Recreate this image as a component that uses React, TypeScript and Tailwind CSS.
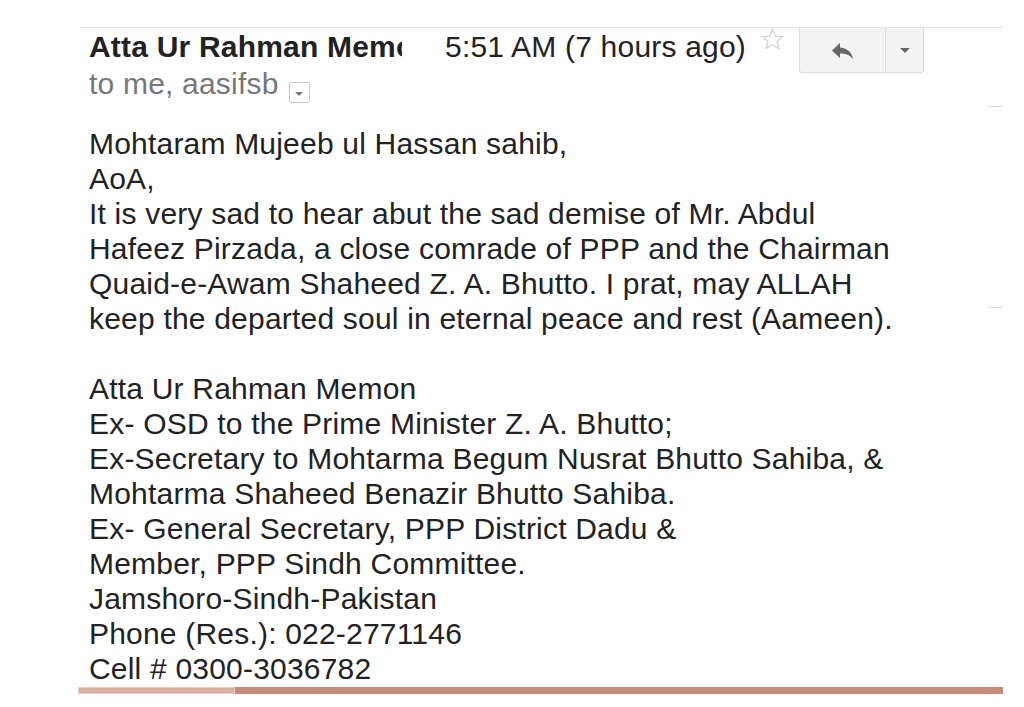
import { useState } from "react";

const bodyLines = [
  "Mohtaram Mujeeb ul Hassan sahib,",
  "AoA,",
  "It is very sad to hear abut the sad demise of Mr. Abdul",
  "Hafeez Pirzada, a close comrade of PPP and the Chairman",
  "Quaid-e-Awam Shaheed Z. A. Bhutto. I prat, may ALLAH",
  "keep the departed soul in eternal peace and rest (Aameen).",
  "",
  "Atta Ur Rahman Memon",
  "Ex- OSD to the Prime Minister Z. A. Bhutto;",
  "Ex-Secretary to Mohtarma Begum Nusrat Bhutto Sahiba, &",
  "Mohtarma Shaheed Benazir Bhutto Sahiba.",
  "Ex- General Secretary, PPP District Dadu &",
  "Member, PPP Sindh Committee.",
  "Jamshoro-Sindh-Pakistan",
  "Phone (Res.): 022-2771146",
  "Cell # 0300-3036782",
];

function StarIcon() {
  return (
    <svg width="25" height="25" viewBox="0 0 24 24" fill="none" stroke="#d4d4d4" strokeWidth="1.3">
      <path d="M12 2.5l2.8 6.3 6.7.6-5.1 4.5 1.6 6.6L12 17l-6 3.5 1.6-6.6-5.1-4.5 6.7-.6z" />
    </svg>
  );
}

function ReplyIcon() {
  return (
    <svg width="24" height="18" viewBox="0 0 24 18" fill="#666">
      <path d="M9 1L1 8.5 9 16v-4.6c6 0 10 1.5 13 5.6-1-6-5-10.5-13-11.4z" />
    </svg>
  );
}

export default function App() {
  const [starred, setStarred] = useState(false);

  return (
    <div className="h-[707px] w-[1024px] overflow-hidden bg-white font-['Liberation_Sans',Arial,sans-serif] tracking-[0.2px] text-[#222]">
      <div className="ml-[80px] mt-[27px] w-[923px] border-t border-[#e3e3e3]">
        <div className="flex items-start pl-[9px]">
          <div className="flex-1 pt-[1px]">
            <div className="flex h-[35px] items-start text-[30px] leading-[35px]">
              <span className="w-[313px] overflow-hidden whitespace-nowrap font-bold">Atta Ur Rahman Memon</span>
              <span className="ml-[43px] whitespace-nowrap">5:51 AM (7 hours ago)</span>
              <button onClick={() => setStarred(!starred)} className="ml-[14px] -mt-[2px]">
                <StarIcon />
              </button>
            </div>
            <div className="flex h-[36px] items-start pt-[2px] text-[30px] leading-[35px] text-[#777]">
              to me, aasifsb
              <span className="ml-[10px] mt-[16px] flex h-[21px] w-[21px] items-center justify-center rounded-[2px] border border-[#c8c8c8]">
                <span className="mt-[3px] border-x-[4px] border-t-[4px] border-x-transparent border-t-[#777]" />
              </span>
            </div>
          </div>
          <div className="mr-[79px] flex h-[45px] w-[125px] rounded-b-[3px] border border-t-0 border-[#dcdcdc] bg-[#f3f3f3]">
            <div className="flex w-[86px] items-center justify-center border-r border-[#dcdcdc] pt-[2px]">
              <ReplyIcon />
            </div>
            <div className="flex flex-1 items-center justify-center">
              <span className="border-x-[5px] border-t-[5px] border-x-transparent border-t-[#666]" />
            </div>
          </div>
        </div>
        <div className="flex justify-end">
          <div className="mt-[6px] h-[1px] w-[15px] bg-[#d8d8d8]" />
        </div>
        <div className="relative pl-[9px] pt-[19px] text-[30px] leading-[35px]">
          <div className="absolute right-0 top-[200px] h-[1px] w-[15px] bg-[#d8d8d8]" />
          {bodyLines.map((line, i) => (
            <div key={i} className="h-[35px] whitespace-nowrap">
              {line}
            </div>
          ))}
        </div>
      </div>
      <div className="ml-[78px] mt-[1px] flex h-[7px] w-[925px]">
        <div className="w-[157px] border border-[#e8d0c8] bg-[#d9aea2]" />
        <div className="flex-1 bg-[#c48b79]" />
      </div>
    </div>
  );
}
